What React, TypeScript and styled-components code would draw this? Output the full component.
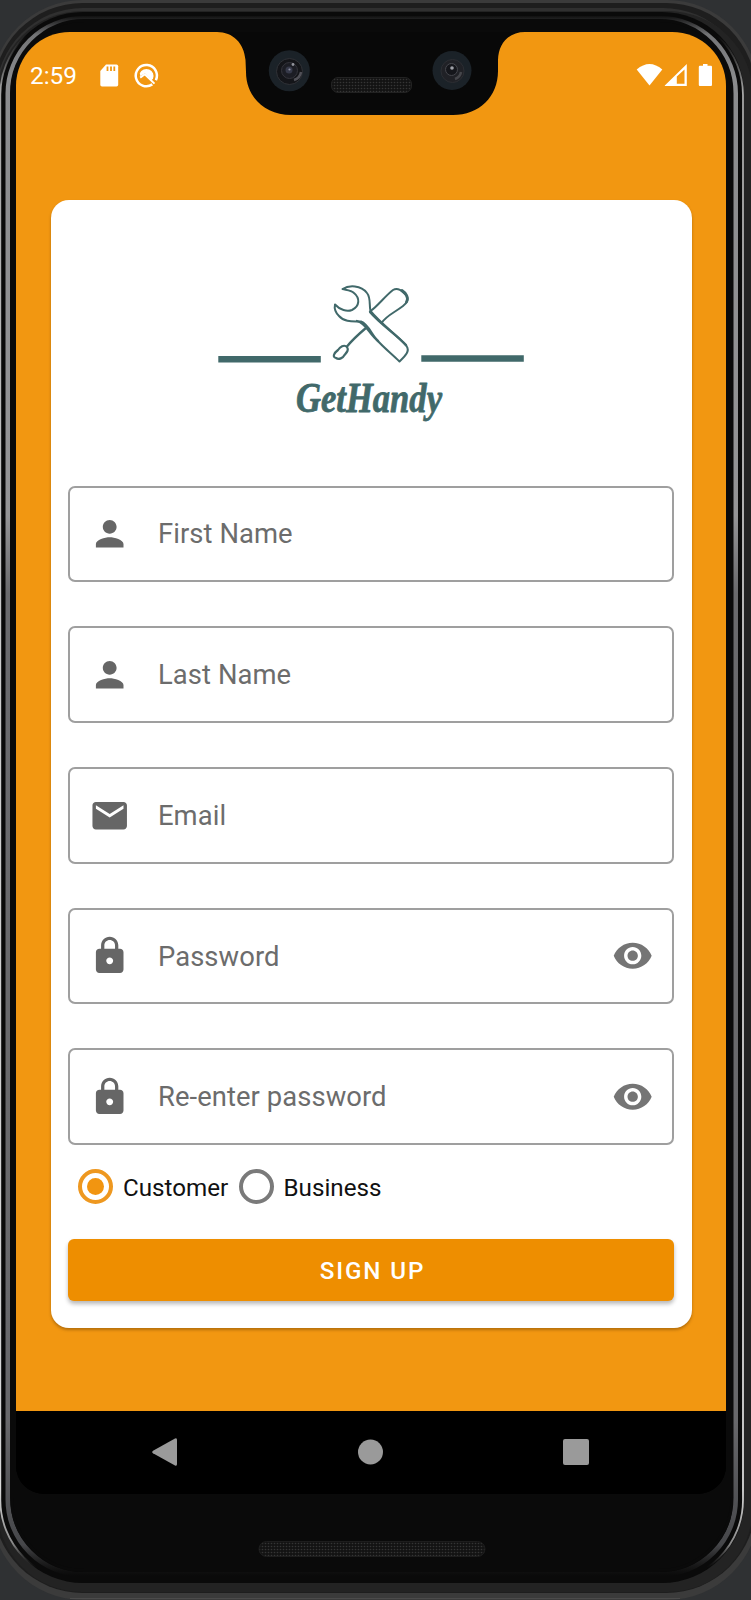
import React from 'react';
import styled, { createGlobalStyle } from 'styled-components';
import { MdPerson, MdEmail, MdLock, MdVisibility } from 'react-icons/md';

const GlobalStyle = createGlobalStyle`
  *, *::before, *::after { box-sizing: border-box; }
  body { margin: 0; background: #2f3133; font-family: Roboto, sans-serif; }
`;

const Device = styled.div`
  position: relative;
  width: 751px;
  height: 1600px;
  overflow: hidden;
  background: #2f3133;
  padding: 32px 25px 0 16px;
`;

const Bezel = styled.svg`
  position: absolute;
  inset: 0;
`;

const Notch = styled.svg`
  position: absolute;
  left: 190px;
  top: -2px;
`;

const Screen = styled.main`
  position: relative;
  height: 1462px;
  display: flex;
  flex-direction: column;
  background: linear-gradient(#f29711 1379px, #000 1379px);
  border-radius: 54px 54px 28px 28px;
  overflow: hidden;
`;

const StatusBar = styled.header`
  height: 168px;
  padding: 31px 14px 0 14px;
  display: flex;
  align-items: flex-start;
  justify-content: space-between;
  color: #fff;
`;

const StatusGroup = styled.div`
  display: flex;
  align-items: center;
  height: 25px;
`;

const Clock = styled.span`
  width: 70px;
  font-size: 24.4px;
  line-height: 25px;
`;

const Card = styled.form`
  width: 641px;
  height: 1128px;
  margin-left: 35px;
  padding: 60px 18px 0 17px;
  display: flex;
  flex-direction: column;
  background: #fff;
  border-radius: 18px;
  box-shadow: 0 2px 3px rgba(90, 50, 0, 0.4);
`;

const Logo = styled.svg`
  align-self: center;
  width: 340px;
  height: 180px;
  margin: 0 2px 45.6px 0;
  flex: none;
`;

const Fields = styled.div`
  display: flex;
  flex-direction: column;
  gap: 44px;
`;

const FieldBox = styled.label`
  display: flex;
  align-items: center;
  height: 96.7px;
  padding: 0 19px 0 18.6px;
  border: 2px solid #9f9f9f;
  border-radius: 7px;
  color: #666;
`;

const FieldLabel = styled.span`
  flex: 1;
  padding-top: 1px;
  margin-left: 28px;
  font-size: 27.4px;
  line-height: 36px;
  letter-spacing: 0.07px;
  color: #6c6c6c;
`;

const EyeButton = styled.span`
  display: flex;
  color: #757575;
`;

const RadioRow = styled.div`
  display: flex;
  align-items: center;
  height: 34px;
  margin: 24.5px 0 35px 10px;
`;

const RadioOption = styled.label<{ $width: number }>`
  display: flex;
  align-items: center;
  gap: 10px;
  width: ${(p) => p.$width}px;
  font-size: 24.2px;
  line-height: 34px;
  color: #111;
`;

const RadioLabel = styled.span`
  padding-top: 2px;
`;

const RadioDot = styled.span<{ $on?: boolean }>`
  display: grid;
  place-items: center;
  flex: none;
  width: 35px;
  height: 35px;
  border: 4px solid ${(p) => (p.$on ? '#ee9820' : '#7a7a7a')};
  border-radius: 50%;

  &::after {
    content: '';
    width: 17px;
    height: 17px;
    border-radius: 50%;
    background: ${(p) => (p.$on ? '#f29510' : 'transparent')};
  }
`;

const SubmitButton = styled.button`
  height: 62px;
  border: 0;
  padding: 2px 0 0 3px;
  border-radius: 6px;
  background: #ee8e00;
  box-shadow: 0 3px 4px rgba(0, 0, 0, 0.28);
  color: #fff;
  font: 500 24.2px/30px Roboto, sans-serif;
  letter-spacing: 1.9px;
`;

const NavBar = styled.nav`
  height: 83px;
  margin-top: auto;
  padding: 0 137px 2px 136px;
  display: flex;
  align-items: center;
  justify-content: space-between;
  background: #000;
`;

const NavIcon = styled.svg`
  display: block;
  fill: #9a9a9a;
`;

function BezelArt() {
  return (
    <Bezel width="751" height="1600" viewBox="0 0 751 1600" fill="none">
      <defs>
        <linearGradient id="inner" x1="0" y1="16" x2="0" y2="1576" gradientUnits="userSpaceOnUse">
          <stop offset="0" stopColor="#8e8f92" stopOpacity="0.05" />
          <stop offset="0.012" stopColor="#8e8f92" stopOpacity="0.8" />
          <stop offset="0.04" stopColor="#8a8b8d" />
          <stop offset="0.32" stopColor="#949496" />
          <stop offset="0.37" stopColor="#6a6a6d" />
          <stop offset="0.9" stopColor="#68686b" />
          <stop offset="0.98" stopColor="#55565a" stopOpacity="0.8" />
          <stop offset="1" stopColor="#333" stopOpacity="0" />
        </linearGradient>
        <linearGradient id="outer" x1="0" y1="12" x2="0" y2="1583" gradientUnits="userSpaceOnUse">
          <stop offset="0.015" stopColor="#777" stopOpacity="0" />
          <stop offset="0.05" stopColor="#a5a5a5" />
          <stop offset="0.4" stopColor="#ccc" />
          <stop offset="0.94" stopColor="#d8d8d8" />
          <stop offset="0.975" stopColor="#888" />
          <stop offset="0.99" stopColor="#444" stopOpacity="0" />
        </linearGradient>
        <pattern id="mesh" width="3" height="3" patternUnits="userSpaceOnUse">
          <rect width="3" height="3" fill="#131313" />
          <circle cx="1.5" cy="1.5" r="0.8" fill="#353535" />
        </pattern>
      </defs>
      <rect x="-9" y="0" width="768" height="1600" rx="92" fill="#3b3b3b" />
      <rect x="-7" y="3" width="763" height="1590" rx="90" fill="#1e1e1e" />
      <rect x="-4" y="8" width="754" height="1580" rx="87" fill="#303030" />
      <rect x="-3" y="11" width="756" height="1581" rx="85" fill="#232323" />
      <rect x="1" y="12" width="743" height="1571" rx="82" fill="#0a0a0a" />
      <rect x="0.3" y="13" width="742.7" height="1569" rx="82" stroke="url(#outer)" strokeWidth="1.8" />
      <rect x="8" y="18.5" width="727.5" height="1556" rx="75" stroke="url(#inner)" strokeWidth="5" />
      <rect x="11.5" y="20.5" width="720.5" height="1550" rx="73" stroke="#0a0a0a" strokeWidth="3" />
      <path d="M70 1598.5H680" stroke="#4b4b4b" />
      <rect x="259" y="1541.5" width="226" height="15" rx="7.5" fill="url(#mesh)" stroke="#1d1d1d" />
    </Bezel>
  );
}

function NotchArt() {
  return (
    <Notch width="340" height="120" viewBox="206 30 340 120">
      <path
        d="M206 30H546V32H525C509 32 498.5 43 498 60V71C498 97 479 115 453 115H291C265 115 246 97 246 72L245.5 60C244 43 233 32 217 32H206Z"
        fill="#080808"
      />
      <circle cx="289.3" cy="70.7" r="20.5" fill="#1b2228" />
      <circle cx="289.5" cy="71.5" r="13" fill="#141519" stroke="#303237" />
      <circle cx="289.5" cy="70.5" r="8" fill="#1c1d24" stroke="#34343b" />
      <circle cx="289" cy="70" r="3.5" fill="#363949" />
      <circle cx="293" cy="64.5" r="1.4" fill="#92949c" />
      <circle cx="289.5" cy="69.5" r="1.1" fill="#8b8da0" />
      <path d="M294 80A10 10 0 0 0 301 72" fill="none" stroke="#515158" strokeWidth="2.5" />
      <circle cx="452" cy="70.5" r="19.5" fill="#1b2228" />
      <circle cx="452.5" cy="71" r="11.5" fill="#202126" stroke="#2c2e33" />
      <circle cx="451.5" cy="69.5" r="6" fill="#15161b" stroke="#45464c" />
      <circle cx="452" cy="68" r="1.8" fill="#a0a1a8" />
      <path d="M455 79A9 9 0 0 0 461 72" fill="none" stroke="#45464b" strokeWidth="2.5" />
      <rect x="331.5" y="77.5" width="80" height="15" rx="6.5" fill="url(#mesh)" stroke="#222" />
    </Notch>
  );
}

function LogoArt() {
  return (
    <Logo viewBox="0 0 340 180" fill="none" stroke="#41696a" strokeWidth="2" strokeLinejoin="round" strokeLinecap="round">
      <path d="M18.3 99.3H120.8M221.3 98.5H323.8" strokeWidth="6.6" strokeLinecap="butt" />
      <path d="M142.5 29C149 25 161 25 167 33C171 38 169 45 170.5 51C181 64 197 75 206.5 86C210 91 206 95 199.5 101.5C192 94 184 88 177 80C171 73 168 64 161 61.5C155 61 145 63 139 56C135 52 134 49 135 44.5C140 50 147 52 152 50C160 46 160 38 154 33C151 30 146 30 142.5 29Z" />
      <path d="M170.5 51C177 47 185 36 193 30C198 27 202 31 206 35C209 39 207 43 203 46C194 53 187 55 181.5 63" />
      <path d="M202 30.5C206 33 209 38 206.5 42" strokeWidth="2.8" />
      <path d="M170 52C180 64 197 75 206 85" strokeWidth="2.3" />
      <path d="M157 61C166 63 169 74 178 81" strokeWidth="2.3" />
      <path d="M166.5 67.5C160 73 153 79 147 86.5" strokeWidth="2.3" />
      <path d="M147 87C144 84 140 87 138 90C134 93 132 97 136 98C139 100 143 98 144.5 95C147 92 149 90 147 87Z" strokeWidth="2.2" />
      <text
        x="96"
        y="151.5"
        textLength="146"
        lengthAdjust="spacingAndGlyphs"
        fill="#41696a"
        stroke="#41696a"
        strokeWidth="0.8"
        fontFamily="'Liberation Serif', serif"
        fontWeight="700"
        fontStyle="italic"
        fontSize="42"
      >
        GetHandy
      </text>
    </Logo>
  );
}

function StatusLeft() {
  return (
    <StatusGroup>
      <Clock>2:59</Clock>
      <svg width="62" height="26" viewBox="0 0 62 26" fill="none">
        <path d="M6 1.5H16.5Q18.2 1.5 18.2 3.2V21.8Q18.2 23.5 16.5 23.5H2Q0.3 23.5 0.3 21.8V8Z" fill="#fff" />
        <path d="M7.5 3.5V8M11 3.5V8M14.3 3.5V8" stroke="#f29711" strokeWidth="1.8" />
        <path d="M52.3 21.4A10.6 10.6 0 1 1 55.9 17.2" stroke="#fff" strokeWidth="2.5" />
        <path d="M39.8 10.3A7.1 7.1 0 1 1 53 15.8L51.5 17.2L44.8 10.2L40.4 13.2Z" fill="#fff" />
        <path d="M40.2 14.6L44.8 11.2L54.5 20.6" stroke="#fff" strokeWidth="2" />
      </svg>
    </StatusGroup>
  );
}

function StatusRight() {
  return (
    <StatusGroup>
      <svg width="76" height="26" viewBox="0 0 76 26" fill="none">
        <path d="M0.7 6.5Q13.5-4.5 26.3 6.5L13.5 22.5Z" fill="#fff" />
        <path fillRule="evenodd" d="M28.8 23V22.5L50.8 1V23ZM48.5 6.5L40.8 13.5V20.8H48.5Z" fill="#fff" />
        <path d="M67 1H71.5V2.7H75Q76 2.7 76 4V21.8Q76 23 75 23H63.8Q62.8 23 62.8 21.8V4Q62.8 2.7 63.8 2.7H67Z" fill="#fff" />
      </svg>
    </StatusGroup>
  );
}

type FieldProps = { icon: React.ReactNode; label: string; secret?: boolean };

function Field({ icon, label, secret }: FieldProps) {
  return (
    <FieldBox>
      {icon}
      <FieldLabel>{label}</FieldLabel>
      {secret && (
        <EyeButton>
          <MdVisibility size={41.4} />
        </EyeButton>
      )}
    </FieldBox>
  );
}

export default function App() {
  return (
    <>
      <GlobalStyle />
      <Device>
        <BezelArt />
        <Screen>
          <StatusBar>
            <StatusLeft />
            <StatusRight />
          </StatusBar>
          <NotchArt />
          <Card>
            <LogoArt />
            <Fields>
              <Field icon={<MdPerson size={41.4} />} label="First Name" />
              <Field icon={<MdPerson size={41.4} />} label="Last Name" />
              <Field icon={<MdEmail size={41.4} />} label="Email" />
              <Field icon={<MdLock size={41.4} />} label="Password" secret />
              <Field icon={<MdLock size={41.4} />} label="Re-enter password" secret />
            </Fields>
            <RadioRow>
              <RadioOption $width={160.5}>
                <RadioDot $on />
                <RadioLabel>Customer</RadioLabel>
              </RadioOption>
              <RadioOption $width={160}>
                <RadioDot />
                <RadioLabel>Business</RadioLabel>
              </RadioOption>
            </RadioRow>
            <SubmitButton type="button">SIGN UP</SubmitButton>
          </Card>
          <NavBar>
            <NavIcon width="25" height="28" viewBox="0 0 25 28">
              <path d="M23 0.5Q25 -0.5 25 2V26Q25 28.5 23 27.5L1 15.3Q-0.6 14 1 12.7Z" />
            </NavIcon>
            <NavIcon width="26" height="26" viewBox="-1 0 26 26">
              <circle cx="12.5" cy="13" r="12.5" />
            </NavIcon>
            <NavIcon width="26" height="26" viewBox="0 0 26 26">
              <rect width="26" height="26" rx="2" />
            </NavIcon>
          </NavBar>
        </Screen>
      </Device>
    </>
  );
}
